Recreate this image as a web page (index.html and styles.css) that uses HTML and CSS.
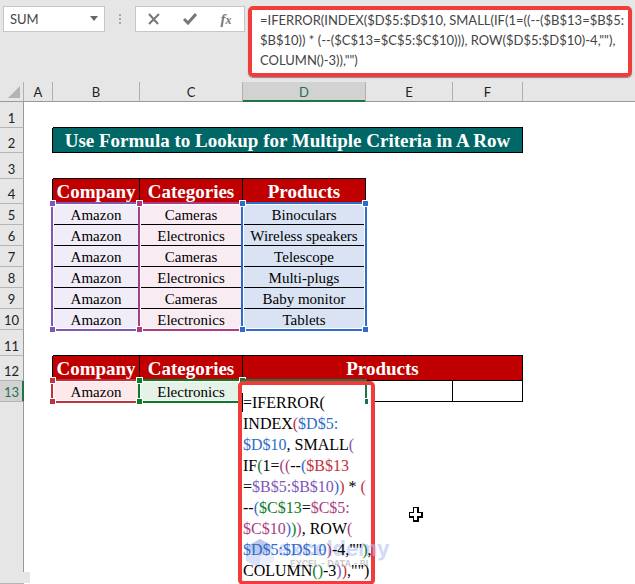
FILE: index.html
```html
<!DOCTYPE html>
<html lang="en">
<head>
  <meta charset="UTF-8">
  <meta name="viewport" content="width=device-width, initial-scale=1.0">
  <title>Use Formula to Lookup for Multiple Criteria in A Row</title>
  <link rel="stylesheet" href="styles.css">
</head>
<body>
  <!-- Formula bar -->
  <header class="formula-bar">
    <div class="name-box">
      <select aria-label="Name box">
        <option>SUM</option>
      </select>
      <svg class="arrow" width="8" height="5" viewBox="0 0 8 5"><path d="M0 0h8L4 5z" fill="#666"/></svg>
    </div>
    <div class="dots"><i></i><i></i><i></i></div>
    <div class="actions">
      <button type="button" aria-label="Cancel">
        <svg width="12" height="12" viewBox="0 0 12 12"><path d="M1 1l9 10M11 1L1 11" stroke="#777" stroke-width="2" fill="none"/></svg>
      </button>
      <button type="button" aria-label="Enter">
        <svg width="14" height="12" viewBox="0 0 14 12"><path d="M1 6l4 4 8-9" stroke="#777" stroke-width="3" fill="none"/></svg>
      </button>
      <button type="button" class="fx" aria-label="Insert function">f<small>x</small></button>
    </div>
    <div class="formula">
      <textarea aria-label="Formula" spellcheck="false">=IFERROR(INDEX($D$5:$D$10, SMALL(IF(1=((--($B$13=$B$5:
$B$10)) * (--($C$13=$C$5:$C$10))), ROW($D$5:$D$10)-4,""),
COLUMN()-3)),"")</textarea>
    </div>
  </header>

  <!-- Worksheet -->
  <main class="sheet">
    <table>
      <colgroup>
        <col class="col-num"><col class="col-a"><col class="col-b"><col class="col-c"><col class="col-d"><col class="col-e"><col class="col-f"><col>
      </colgroup>
      <thead>
        <tr>
          <th class="corner"><svg width="12" height="12" viewBox="0 0 12 12"><path d="M12 0v12H0z" fill="#b3b3b3"/></svg></th>
          <th>A</th><th>B</th><th>C</th><th class="active">D</th><th>E</th><th>F</th><th class="rest"></th>
        </tr>
      </thead>
      <tbody>
        <tr class="tall"><th>1</th><td></td><td class="line" colspan="5"></td><td></td></tr>
        <tr class="mid"><th>2</th><td class="side"></td><td class="title" colspan="5">Use Formula to Lookup for Multiple Criteria in A Row</td><td></td></tr>
        <tr class="tall"><th>3</th><td></td><td class="line" colspan="3"></td><td colspan="3"></td></tr>
        <tr class="mid"><th>4</th><td class="side"></td><td class="head">Company</td><td class="head">Categories</td><td class="head">Products</td><td colspan="3"></td></tr>
        <tr>
          <th>5</th><td class="side"></td>
          <td class="cell purple">Amazon<div class="range rows-6"><i></i><i></i><i></i><i></i></div></td>
          <td class="cell pink">Cameras<div class="range rows-6"><i></i><i></i><i></i><i></i></div></td>
          <td class="cell blue">Binoculars<div class="range rows-6"><i></i><i></i><i></i><i></i></div></td>
          <td colspan="3"></td>
        </tr>
        <tr><th>6</th><td class="side"></td><td class="cell purple">Amazon</td><td class="cell pink">Electronics</td><td class="cell blue">Wireless speakers</td><td colspan="3"></td></tr>
        <tr><th>7</th><td class="side"></td><td class="cell purple">Amazon</td><td class="cell pink">Cameras</td><td class="cell blue">Telescope</td><td colspan="3"></td></tr>
        <tr><th>8</th><td class="side"></td><td class="cell purple">Amazon</td><td class="cell pink">Electronics</td><td class="cell blue">Multi-plugs</td><td colspan="3"></td></tr>
        <tr><th>9</th><td class="side"></td><td class="cell purple">Amazon</td><td class="cell pink">Cameras</td><td class="cell blue">Baby monitor</td><td colspan="3"></td></tr>
        <tr><th>10</th><td class="side"></td><td class="cell purple">Amazon</td><td class="cell pink">Electronics</td><td class="cell blue">Tablets</td><td colspan="3"></td></tr>
        <tr class="tall"><th>11</th><td></td><td class="line" colspan="5"></td><td></td></tr>
        <tr class="mid"><th>12</th><td class="side"></td><td class="head">Company</td><td class="head">Categories</td><td class="head" colspan="3">Products</td><td></td></tr>
        <tr>
          <th class="active">13</th><td class="side"></td>
          <td class="cell red">Amazon<div class="range"><i></i><i></i><i></i><i></i></div></td>
          <td class="cell green">Electronics<div class="range"><i></i><i></i><i></i><i></i></div></td>
          <td class="cell">
            <div class="editor">
              <div class="watermark">
                <svg width="28" height="30" viewBox="0 0 28 30">
                  <path d="M14 0l14 8v14l-14 8L0 22V8z" fill="#c3cdf0"/>
                  <path d="M14 0l14 8-14 9L0 8z" fill="#8fa3de"/>
                  <path d="M14 17l14-9v14l-14 8z" fill="#dde3f7"/>
                </svg>
                <div><b>exceldemy</b><small>EXCEL - DATA - BI</small></div>
              </div>
              <div class="code">=IFERROR(<br>INDEX<span class="c-red">(</span><span class="c-blue">$D$5:</span><br><span class="c-blue">$D$10</span>, SMALL<span class="c-purple">(</span><br>IF<span class="c-green">(</span>1=<span class="c-pink">((</span>--<span class="c-blue">(</span><span class="c-red">$B$13</span><br>=<span class="c-purple">$B$5:$B$10</span><span class="c-blue">)</span><span class="c-red">)</span> * <span class="c-red">(</span><br>--<span class="c-blue">(</span><span class="c-green">$C$13</span>=<span class="c-pink">$C$5:</span><br><span class="c-pink">$C$10</span><span class="c-blue">)</span><span class="c-green">)</span><span class="c-pink">)</span>, ROW<span class="c-pink">(</span><br><span class="c-blue">$D$5:$D$10</span><span class="c-pink">)</span>-4,""<span class="c-green">)</span>,<br>COLUMN<span class="c-green">()</span>-3<span class="c-purple">)</span><span class="c-red">)</span>,"")</div>
              <div class="caret"></div>
              <div class="cell-edge"></div>
            </div>
          </td>
          <td class="cell"></td><td class="cell"></td><td></td>
        </tr>
        <tr class="fill"><th></th><td colspan="7"></td></tr>
      </tbody>
    </table>
    <div class="tab-stub"></div>
    <svg class="pointer" width="16" height="17" viewBox="0 0 16 17"><path d="M5 1h6v5h4v6h-4v4H5v-4H1V6h4z" fill="#000"/><path d="M6 2h3v5h4v3H9v4H6v-4H2V7h4z" fill="#fff"/></svg>
  </main>
</body>
</html>
```

FILE: styles.css
```css
* {
  box-sizing: border-box;
}

body {
  margin: 0;
  height: 100vh;
  display: flex;
  flex-direction: column;
  overflow: hidden;
  background: #e6e6e6;
  font-family: Lato, sans-serif;
  color: #444;
}

/* Formula bar */
.formula-bar {
  display: flex;
  align-items: flex-start;
  height: 82px;
  padding: 6px 0 0 3px;
}

.name-box {
  position: relative;
  width: 102px;
}

.name-box select {
  appearance: none;
  display: block;
  width: 100%;
  height: 26px;
  padding: 0 6px;
  border: 1px solid #c6c6c6;
  border-radius: 0;
  background: #fff;
  color: #444;
  font: 13px Lato, sans-serif;
}

.name-box .arrow {
  position: absolute;
  right: 7px;
  top: 10px;
  pointer-events: none;
}

.dots {
  display: flex;
  flex-direction: column;
  align-items: center;
  gap: 2px;
  width: 30px;
  padding-top: 8px;
}

.dots i {
  width: 2px;
  height: 2px;
  background: #a6a6a6;
}

.actions {
  display: flex;
  align-items: center;
  justify-content: space-around;
  width: 110px;
  height: 26px;
  border: 1px solid #c6c6c6;
  background: #fff;
}

.actions button {
  display: flex;
  align-items: center;
  justify-content: center;
  width: 24px;
  height: 22px;
  padding: 0;
  border: 0;
  background: none;
}

.actions .fx {
  align-items: baseline;
  font: italic bold 15px/22px "Liberation Serif", serif;
  color: #777;
}

.fx small {
  font-size: 12px;
}

.formula {
  flex: 1;
  margin: 0 3px;
  height: 71px;
  border: 4px solid #f23c3c;
  border-radius: 5px;
  box-shadow: 0 1px 1px #888;
}

.formula textarea {
  display: block;
  width: 100%;
  height: 100%;
  padding: 0 0 0 8px;
  border: 0;
  outline: 0;
  resize: none;
  overflow: hidden;
  white-space: pre;
  background: #fff;
  color: #444;
  font: 13px/20px Lato, sans-serif;
}

/* Worksheet */
.sheet {
  position: relative;
  flex: 1;
  background: #fff;
}

table {
  width: 100%;
  height: 100%;
  table-layout: fixed;
  border-collapse: separate;
  border-spacing: 0;
}

.col-num { width: 24px; }
.col-a { width: 29px; }
.col-b { width: 87px; }
.col-c { width: 103px; }
.col-d { width: 123px; }
.col-e { width: 87px; }
.col-f { width: 70px; }

th,
td {
  padding: 0;
  text-align: center;
}

th {
  background: #e6e6e6;
  color: #222;
  font: 13px/18px Lato, sans-serif;
  border-right: 1px solid #999;
  border-bottom: 1px solid #b5b5b5;
}

thead th {
  height: 20px;
  border-right-color: #b0b0b0;
  border-bottom-color: #999;
}

thead .active {
  background: #d2d2d2;
  color: #217346;
  border-bottom-color: #217346;
  box-shadow: inset 0 -1px #217346;
}

thead .rest {
  border-right: 0;
}

.corner svg {
  display: block;
  margin-left: 8px;
}

tbody tr { height: 21px; }
tbody .mid { height: 25px; }
tbody .tall { height: 26px; }
tbody .fill { height: auto; }

tbody th {
  vertical-align: bottom;
}

tbody th.active {
  background: #d2d2d2;
  color: #217346;
  border-right-color: #217346;
  box-shadow: inset -1px 0 #217346;
}

.line { border-bottom: 1px solid #000; }
.side { border-right: 1px solid #000; }

.title,
.head,
.cell {
  border-right: 1px solid #000;
  border-bottom: 1px solid #000;
  font-family: "Liberation Serif", serif;
  color: #000;
}

.title,
.head {
  padding-top: 2px;
  background: #c00000;
  color: #fff;
  font-size: 19px;
  font-weight: bold;
  line-height: 22px;
}

.title {
  background: #006666;
}

.cell {
  position: relative;
  padding-top: 2px;
  font-size: 15px;
  line-height: 18px;
}

.purple { --tone: #7e57b8; background: #f0edf8; }
.pink { --tone: #ab3c80; background: #f8ebf1; }
.blue { --tone: #2f6bc9; background: #d9e3f3; }
.red { --tone: #c0323c; background: #fde9ea; }
.green { --tone: #0a7c28; background: #e5f2e8; }

/* Coloured reference outlines */
.range {
  position: absolute;
  z-index: 1;
  top: -2px;
  left: -2px;
  right: -2px;
  height: 24px;
  border: 2px solid var(--tone);
  box-shadow: inset 0 0 0 1px #fff;
}

.rows-6 {
  height: 129px;
}

.range i {
  position: absolute;
  width: 7px;
  height: 7px;
  border: 1px solid #fff;
  background: var(--tone);
}

.range i:nth-child(odd) { left: -4px; }
.range i:nth-child(even) { right: -4px; }
.range i:nth-child(-n+2) { top: -4px; }
.range i:nth-child(n+3) { bottom: -4px; }

/* Cell in edit mode */
.editor {
  position: absolute;
  z-index: 2;
  top: 0;
  left: -5px;
  right: -10px;
  padding-top: 7px;
  border: 4px solid #f23c3c;
  border-radius: 5px;
  background: #fff;
  text-align: left;
}

.editor::before {
  content: "";
  position: absolute;
  top: -6px;
  left: 0;
  right: 4px;
  height: 2px;
  background: #217346;
}

.code {
  position: relative;
  padding-left: 1px;
  font-size: 16px;
  line-height: 21px;
  white-space: nowrap;
}

.c-red { color: #c0323c; }
.c-blue { color: #2f6bc9; }
.c-purple { color: #7e57b8; }
.c-green { color: #0a7c28; }
.c-pink { color: #ab3c80; }

.caret {
  position: absolute;
  left: 0;
  top: 8px;
  width: 1px;
  height: 19px;
  background: #000;
}

.cell-edge {
  position: absolute;
  top: 0;
  right: 4px;
  width: 2px;
  height: 13px;
  background: #217346;
}

.cell-edge::after {
  content: "";
  position: absolute;
  top: 14px;
  left: 0;
  width: 3px;
  height: 5px;
  background: #217346;
}

.watermark {
  position: absolute;
  left: 4px;
  bottom: 12px;
  display: flex;
  gap: 4px;
  opacity: 0.6;
  font-family: Inter, sans-serif;
}

.watermark b,
.watermark small {
  display: block;
  white-space: nowrap;
  color: #b3c2f2;
  font-size: 21px;
  line-height: 20px;
}

.watermark small {
  padding-left: 12px;
  color: #aaa;
  font-size: 9px;
  font-weight: bold;
  line-height: 10px;
}

.tab-stub {
  position: absolute;
  left: 0;
  bottom: 1px;
  width: 30px;
  height: 11px;
  background: #e6e6e6;
}

.pointer {
  position: absolute;
  left: 408px;
  top: 424px;
}
```
